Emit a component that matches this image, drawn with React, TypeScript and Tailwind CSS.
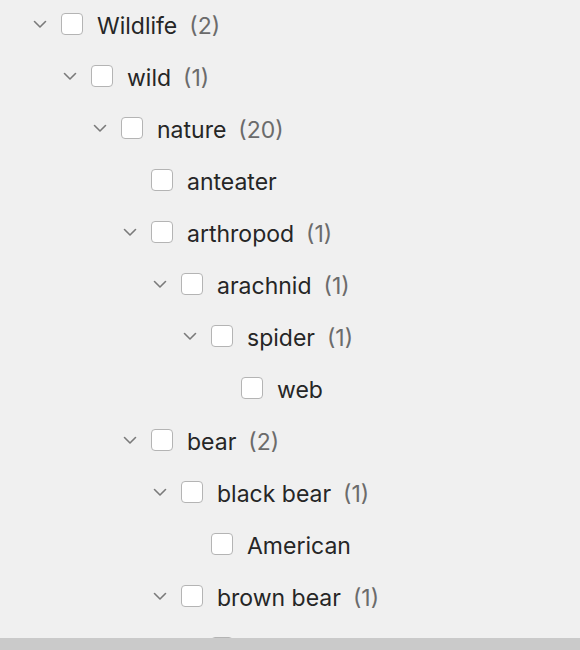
type Node = { label: string; count?: number; level: number; open?: boolean };

const rows: Node[] = [
  { label: "Wildlife", count: 2, level: 0, open: true },
  { label: "wild", count: 1, level: 1, open: true },
  { label: "nature", count: 20, level: 2, open: true },
  { label: "anteater", level: 3 },
  { label: "arthropod", count: 1, level: 3, open: true },
  { label: "arachnid", count: 1, level: 4, open: true },
  { label: "spider", count: 1, level: 5, open: true },
  { label: "web", level: 6 },
  { label: "bear", count: 2, level: 3, open: true },
  { label: "black bear", count: 1, level: 4, open: true },
  { label: "American", level: 5 },
  { label: "brown bear", count: 1, level: 4, open: true },
  { label: "", level: 5 },
];

function Chevron() {
  return (
    <svg width="14" height="9" viewBox="0 0 14 9" fill="none">
      <path d="M1.5 1.5 L7 7 L12.5 1.5" stroke="#7a7a7a" strokeWidth="1.6" strokeLinecap="round" strokeLinejoin="round" />
    </svg>
  );
}

function Row({ node }: { node: Node }) {
  return (
    <div className="flex h-[52px] items-center shrink-0" style={{ paddingLeft: 29 + node.level * 30 }}>
      <div className="flex w-[22px] h-[22px] items-center justify-center">
        {node.open ? <Chevron /> : null}
      </div>
      <div className="ml-[10px] w-[22px] h-[22px] rounded-[4px] border-[1.5px] border-[#b4b4b4] bg-white shrink-0" />
      {node.label && (
        <span className="ml-[14px] mt-[4px] text-[23px] text-[#262626] leading-none">{node.label}</span>
      )}
      {node.count !== undefined && (
        <span className="ml-[12px] mt-[4px] text-[23px] text-[#6b6b6b] leading-none">({node.count})</span>
      )}
    </div>
  );
}

export default function App() {
  return (
    <div className="flex flex-col w-[580px] h-[650px] bg-[#f0f0f0] overflow-hidden" style={{ fontFamily: "Inter, 'Noto Sans', sans-serif" }}>
      <div className="flex flex-col flex-1 overflow-hidden">
        <div className="flex flex-col -mt-[2px]">
          {rows.map((r, i) => (
            <Row key={i} node={r} />
          ))}
        </div>
      </div>
      <div className="h-[12px] bg-[#cacaca] shrink-0" />
    </div>
  );
}
